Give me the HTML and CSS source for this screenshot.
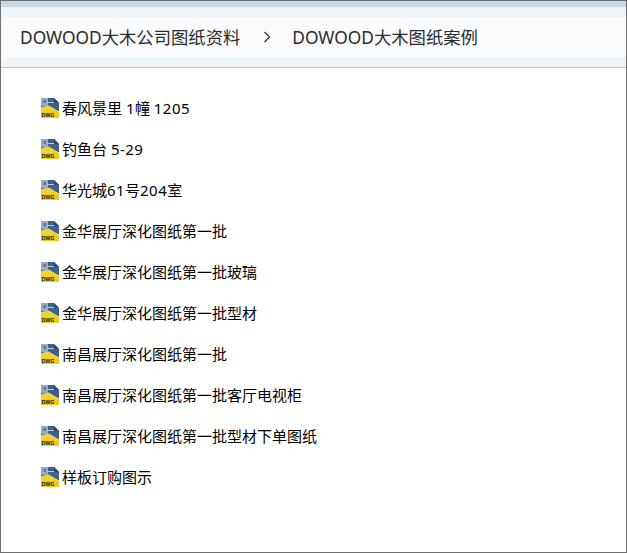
FILE: index.html
```html
<!DOCTYPE html>
<html lang="zh-CN">
<head>
<meta charset="utf-8">
<title>DOWOOD大木图纸案例</title>
<link rel="stylesheet" href="styles.css">
</head>
<body>
<svg class="defs" width="0" height="0" aria-hidden="true">
  <symbol id="dwg" viewBox="0 0 18 20">
    <path d="M0 0H13L18 5V20H0Z" fill="#fff"/>
    <path d="M0 0H13L18 5V13L0 15Z" fill="#3f6088"/>
    <path d="M0 0H7V8H0Z" fill="#97abc4"/>
    <path d="M2.5 2H5V5H2.5Z" fill="#557599"/>
    <path d="M6 4.5H14" stroke="#b9c8da" stroke-width="1" fill="none"/>
    <path d="M13 0L18 5H13Z" fill="#2c4a75"/>
    <path d="M0 9.5L8 8L18 14V20H0Z" fill="#f4d22a"/>
    <path d="M0 9.5L8 8L18 14" stroke="#dcd9b0" stroke-width=".8" fill="none"/>
    <path d="M0 14H18V20H0Z" fill="#f3cb12"/>
  </symbol>
</svg>
<div class="window">
  <div class="topstrip"></div>
  <header class="bar">
    <nav class="crumbs">
      <span>DOWOOD大木公司图纸资料</span>
      <svg class="chev" viewBox="0 0 8 12" width="8" height="12"><path d="M1.5 1L6.5 6L1.5 11" fill="none" stroke="#333" stroke-width="1.3"/></svg>
      <span>DOWOOD大木图纸案例</span>
    </nav>
  </header>
  <ul class="files">
    <li class="file"><svg class="icon" viewBox="0 0 18 20"><use href="#dwg"/><text x=".4" y="19" class="dwg-text">DWG</text></svg><span>春风景里 <span class="num">1</span>幢 <span class="num">1205</span></span></li>
    <li class="file"><svg class="icon" viewBox="0 0 18 20"><use href="#dwg"/><text x=".4" y="19" class="dwg-text">DWG</text></svg><span>钓鱼台 <span class="num">5-29</span></span></li>
    <li class="file"><svg class="icon" viewBox="0 0 18 20"><use href="#dwg"/><text x=".4" y="19" class="dwg-text">DWG</text></svg><span>华光城<span class="num">61</span>号<span class="num">204</span>室</span></li>
    <li class="file"><svg class="icon" viewBox="0 0 18 20"><use href="#dwg"/><text x=".4" y="19" class="dwg-text">DWG</text></svg><span>金华展厅深化图纸第一批</span></li>
    <li class="file"><svg class="icon" viewBox="0 0 18 20"><use href="#dwg"/><text x=".4" y="19" class="dwg-text">DWG</text></svg><span>金华展厅深化图纸第一批玻璃</span></li>
    <li class="file"><svg class="icon" viewBox="0 0 18 20"><use href="#dwg"/><text x=".4" y="19" class="dwg-text">DWG</text></svg><span>金华展厅深化图纸第一批型材</span></li>
    <li class="file"><svg class="icon" viewBox="0 0 18 20"><use href="#dwg"/><text x=".4" y="19" class="dwg-text">DWG</text></svg><span>南昌展厅深化图纸第一批</span></li>
    <li class="file"><svg class="icon" viewBox="0 0 18 20"><use href="#dwg"/><text x=".4" y="19" class="dwg-text">DWG</text></svg><span>南昌展厅深化图纸第一批客厅电视柜</span></li>
    <li class="file"><svg class="icon" viewBox="0 0 18 20"><use href="#dwg"/><text x=".4" y="19" class="dwg-text">DWG</text></svg><span>南昌展厅深化图纸第一批型材下单图纸</span></li>
    <li class="file"><svg class="icon" viewBox="0 0 18 20"><use href="#dwg"/><text x=".4" y="19" class="dwg-text">DWG</text></svg><span>样板订购图示</span></li>
  </ul>
</div>
</body>
</html>
```

FILE: styles.css
```css
* { box-sizing: border-box; }
html, body { height: 100%; }
body {
  margin: 0;
  background: #fff;
  font-family: "Noto Sans CJK SC", "Liberation Sans", sans-serif;
  color: #000;
  overflow: hidden;
}
.defs { position: absolute; }
.dwg-text { font: 700 5.4px "Liberation Sans", sans-serif; fill: #222; }
.window {
  height: 553px;
  border: 1px solid #707070;
  display: flex;
  flex-direction: column;
}
.topstrip { height: 6px; background: #c6d9e9; }
.bar {
  height: 61px;
  padding: 10px 0;
  background: #eff4f8;
  border-bottom: 1px solid #b8c9d6;
}
.crumbs {
  height: 40px;
  background: #f9fbfd;
  display: flex;
  align-items: center;
  padding: 0 0 2px 19px;
  font-family: "Noto Sans", "Noto Sans CJK SC", sans-serif;
  font-size: 17.33px;
  color: #2b2b2b;
  white-space: nowrap;
}
.chev { margin: 2px 21px 0 23px; }
.files {
  list-style: none;
  margin: 0;
  padding: 20px 0 0 40px;
}
.file {
  height: 41px;
  display: flex;
  align-items: flex-start;
  gap: 3px;
  padding-top: 10px;
  font-family: "Noto Sans", "Noto Sans CJK SC", sans-serif;
  font-size: 15px;
  line-height: 20px;
  white-space: nowrap;
}
.num { letter-spacing: 0.45px; }
.icon { width: 18px; height: 20px; flex: none; }
```
